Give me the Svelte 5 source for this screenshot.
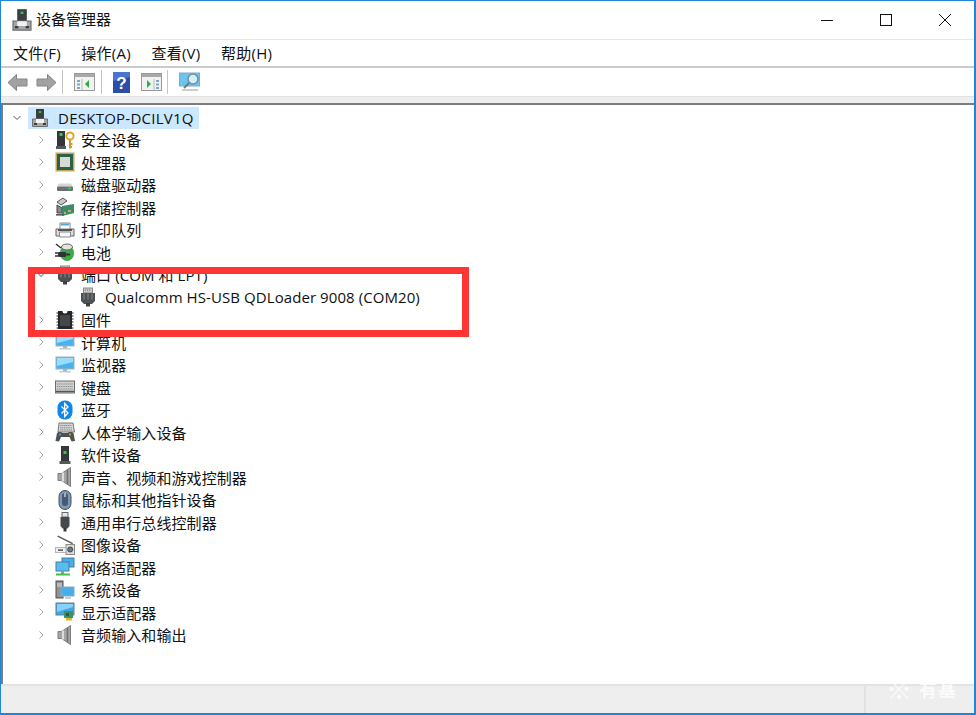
<script lang="ts">
  const menus = ["文件(F)", "操作(A)", "查看(V)", "帮助(H)"];

  const devices = [
    { label: "安全设备", icon: "security" },
    { label: "处理器", icon: "cpu" },
    { label: "磁盘驱动器", icon: "disk" },
    { label: "存储控制器", icon: "storage" },
    { label: "打印队列", icon: "printer" },
    { label: "电池", icon: "battery" },
    { label: "端口 (COM 和 LPT)", icon: "port", open: true },
    { label: "Qualcomm HS-USB QDLoader 9008 (COM20)", icon: "port", child: true },
    { label: "固件", icon: "firmware" },
    { label: "计算机", icon: "monitor" },
    { label: "监视器", icon: "monitor" },
    { label: "键盘", icon: "keyboard" },
    { label: "蓝牙", icon: "bluetooth" },
    { label: "人体学输入设备", icon: "hid" },
    { label: "软件设备", icon: "software" },
    { label: "声音、视频和游戏控制器", icon: "sound" },
    { label: "鼠标和其他指针设备", icon: "mouse" },
    { label: "通用串行总线控制器", icon: "usb" },
    { label: "图像设备", icon: "camera" },
    { label: "网络适配器", icon: "network" },
    { label: "系统设备", icon: "system" },
    { label: "显示适配器", icon: "display" },
    { label: "音频输入和输出", icon: "sound" },
  ];
</script>

{#snippet computer_icon(size)}
  <svg width={size} height={size} viewBox="0 0 20 20">
    <rect x="6" y="1" width="8" height="10" fill="#3c3f42" />
    <rect x="8.800" y="3" width="2.400" height="2" fill="#35c24a" />
    <path d="M2.500 11h15v7.500h-15z" fill="#a8a8a8" stroke="#6f6f6f" />
    <path d="M6 11h8v4H6z" fill="#f2f2f2" />
    <rect x="4" y="15" width="3" height="2" fill="#3c3f42" />
    <rect x="13" y="15" width="3" height="2" fill="#3c3f42" />
  </svg>
{/snippet}

{#snippet device_icon(name)}
  <svg width="20" height="20" viewBox="0 0 20 20">
    {#if name === "security"}
      <rect x="2" y="1" width="8" height="15" fill="#34383a" />
      <rect x="4.500" y="3" width="3" height="3" fill="#2ecc40" />
      <rect x="1" y="16" width="10" height="3" fill="#55595c" />
      <circle cx="15" cy="6" r="3.600" fill="none" stroke="#e0a52e" stroke-width="2" />
      <path d="M15 9.500v9M15 14h2.500M15 17h2" stroke="#d5982a" stroke-width="2" fill="none" />
    {:else if name === "cpu"}
      <rect x="0.500" y="0.500" width="19" height="19" fill="#c4a65a" />
      <rect x="2" y="2" width="16" height="16" fill="#2c6148" />
      <rect x="5" y="5" width="10" height="10" fill="#d9dad6" />
    {:else if name === "disk"}
      <path d="M2 11.500 4 8.500h12l2 3z" fill="#d5d5d5" />
      <rect x="2" y="11.500" width="16" height="4.500" rx="1" fill="#6c6f71" />
      <rect x="13" y="12.600" width="3" height="1.600" fill="#37d04a" />
    {:else if name === "storage"}
      <path d="M2 5 8 1l4 3-6 4z" fill="#c9c9c9" stroke="#555" />
      <path d="M2 8l5 3v5H2z" fill="#8b8b8b" stroke="#444" />
      <path d="M7 9l12-2v9l-12 3z" fill="#3b8c68" />
      <path d="M9 15h2v2H9zM13 13h3v2h-3z" fill="#c7b15a" />
      <path d="M1 17h8v1.600H1z" fill="#55595c" />
    {:else if name === "printer"}
      <path d="M1 9h18v7H1z" fill="#dcdee0" stroke="#63676a" />
      <path d="M5 3h10v6H5z" fill="#fff" stroke="#8a8a8a" />
      <path d="M6 3.500h8v2H6z" fill="#4aa8e8" />
      <path d="M3 9h14v2H3z" fill="#50565a" />
      <path d="M4.500 12h11v5h-11z" fill="#f8f8f8" stroke="#8a8a8a" />
    {:else if name === "battery"}
      <ellipse cx="12" cy="11" rx="7" ry="8" fill="#3ea84a" />
      <ellipse cx="12" cy="5" rx="5.500" ry="3" fill="#dfe6e0" stroke="#666" />
      <path d="M1 2l5 4" stroke="#333" stroke-width="1.500" />
      <rect x="3" y="10" width="8" height="5" rx="1" fill="#2f3335" />
      <path d="M0 11h3M0 14h3" stroke="#2f3335" stroke-width="1.400" />
      <path d="M11 12.500h4" stroke="#2f3335" stroke-width="2" />
    {:else if name === "port"}
      <rect x="5.500" y="1" width="9" height="5" fill="#c6c6c6" stroke="#8a8a8a" />
      <path d="M7 3h6" stroke="#777" stroke-dasharray="1 1" />
      <path d="M3 6h14v8l-3 3H6l-3-3z" fill="#4d5154" />
      <rect x="8" y="16" width="4" height="3.500" fill="#3c4042" />
      <path d="M6 6.500v6M10 6.500v6M14 6.500v6" stroke="#7f8284" stroke-width="1.200" />
    {:else if name === "firmware"}
      <path d="M3 1h4.500a2.500 2.500 0 0 0 5 0H17v18H3z" fill="#25282a" />
      <path d="M3 3H1.500M3 6H1.500M3 9H1.500M3 12H1.500M3 15H1.500M3 18H1.500M17 3h1.500M17 6h1.500M17 9h1.500M17 12h1.500M17 15h1.500M17 18h1.500" stroke="#6d6d6d" stroke-width="1.500" />
      <rect x="5" y="5" width="10" height="11" fill="#44484a" />
    {:else if name === "monitor"}
      <rect x="1" y="2" width="18" height="12" fill="#49b2ee" stroke="#9fb4c4" />
      <path d="M2 3h16v4L2 11z" fill="#9cdcfb" />
      <rect x="8" y="14" width="4" height="2" fill="#a9b3ba" />
      <rect x="4.500" y="16" width="11" height="1.500" fill="#c3c9cd" />
    {:else if name === "keyboard"}
      <rect x="0.500" y="4" width="19" height="12" fill="#cfd0d0" stroke="#6c6e70" />
      <path d="M2 7h16M2 9.500h16M2 12h16" stroke="#8b8d8e" stroke-dasharray="1.200 .6" />
      <path d="M1 14.500h18" stroke="#55585a" stroke-width="1.500" />
    {:else if name === "bluetooth"}
      <rect x="2.500" y="0.500" width="15" height="19" rx="7" fill="#0f86e8" />
      <path d="M6.500 6.500 13 13l-3.300 3.500v-13L13 7l-6.500 6.500" fill="none" stroke="#fff" stroke-width="1.300" />
    {:else if name === "hid"}
      <path d="M3 10 4 1h14l1.500 9z" fill="#d5d5d5" stroke="#777" />
      <path d="M5.500 3.500h11M5.200 5.800h11.600M5 8h12" stroke="#808080" stroke-dasharray="1.200 .6" />
      <path d="M0.500 19l1.500-8c1-1.500 4.500-1.500 5.500 0h5c1-1.500 5-1.500 6 0l1.500 8-3.500 .5-2-4.500H6l-2 4.500z" fill="#4d5255" />
      <circle cx="15" cy="12.500" r="1" fill="#e6b422" />
      <circle cx="5" cy="12.500" r="1" fill="#4aa8e8" />
    {:else if name === "software"}
      <rect x="6" y="1" width="8" height="15" fill="#34383a" />
      <rect x="8.500" y="6" width="3" height="3" fill="#2ecc40" />
      <rect x="4.500" y="16" width="11" height="3" fill="#55595c" />
    {:else if name === "sound"}
      <path d="M3 6.500h3.500L15.500 .5v19l-9-6H3z" fill="#a3a5a6" stroke="#7c7e80" />
      <path d="M8 5.500v9" stroke="#dcdcdc" stroke-width="2" />
      <path d="M12.500 3v14" stroke="#6d6f70" stroke-width="1.500" />
    {:else if name === "mouse"}
      <rect x="4" y="0.500" width="12" height="19" rx="6" fill="#7d97b4" stroke="#45525e" />
      <rect x="7" y="3" width="6" height="13" rx="3" fill="#445a75" />
      <path d="M10 3v4" stroke="#c4cfdb" stroke-width="1.500" />
    {:else if name === "usb"}
      <rect x="7" y="0.500" width="6" height="4.500" fill="#e6e6e6" stroke="#666" />
      <path d="M5.500 5h9v9l-2 2.500h-5L5.500 14z" fill="#45494c" />
      <rect x="8.500" y="16" width="3" height="3.500" fill="#34383a" />
    {:else if name === "camera"}
      <path d="M3 .5l15 7.500-.6 1.200L2.400 1.700z" fill="#55585a" />
      <rect x="11" y="9.500" width="8.500" height="10" fill="#d9d9d9" stroke="#8a8a8a" />
      <circle cx="15.200" cy="14.500" r="2.500" fill="#5b7f92" stroke="#444" />
      <rect x="0.500" y="12.500" width="10.500" height="5" fill="#ececec" stroke="#b5b5b5" />
      <rect x="3" y="14.500" width="5" height="1.200" fill="#333" />
    {:else if name === "network"}
      <rect x="7" y="1" width="12" height="9" fill="#46aeea" stroke="#4c7d9a" />
      <rect x="1" y="5" width="13" height="9" fill="#54bdf2" stroke="#4c7d9a" />
      <path d="M6 14h3v3H6z" fill="#8ba08e" />
      <path d="M1 17.500h14" stroke="#3fbf4a" stroke-width="2" />
    {:else if name === "system"}
      <rect x="1" y="1" width="7" height="17" fill="#8f9294" stroke="#4c5052" />
      <path d="M2 4h5M2 6h5" stroke="#e0e0e0" />
      <rect x="6" y="7" width="13" height="9" fill="#46aeea" stroke="#8fa7b8" />
      <path d="M10 18h6" stroke="#b9c1c6" stroke-width="1.500" />
    {:else if name === "display"}
      <rect x="1" y="1" width="18" height="12" fill="#3fa6e4" stroke="#647f94" />
      <path d="M2 2h16v3L2 10z" fill="#86d2f8" />
      <rect x="9" y="9" width="9" height="7" fill="#3f8f68" />
      <rect x="11" y="16" width="6" height="2.500" fill="#e4b32a" />
      <rect x="11" y="11" width="3" height="3" fill="#2b5e46" />
    {/if}
  </svg>
{/snippet}

<div class="window">
  <header class="titlebar">
    {@render computer_icon(24)}
    <span class="title">设备管理器</span>
    <div class="caption">
      <span class="cap"><i class="min"></i></span>
      <span class="cap"><i class="max"></i></span>
      <span class="cap">
        <svg width="14" height="14" viewBox="0 0 14 14"><path d="M1 1l12 12M13 1L1 13" stroke="#111" fill="none" /></svg>
      </span>
    </div>
  </header>

  <nav class="menubar">
    {#each menus as menu}
      <span>{menu}</span>
    {/each}
  </nav>

  <div class="toolbar">
    <svg class="tool arrow" width="21" height="19" viewBox="0 0 21 19">
      <path d="M1 9.500l8.500-8v4.500h10.500v7H9.500v4.500z" fill="#a2a2a2" stroke="#858585" />
    </svg>
    <svg class="tool arrow" width="21" height="19" viewBox="0 0 21 19">
      <path d="M20 9.500l-8.500-8v4.500H1v7h10.500v4.500z" fill="#a2a2a2" stroke="#858585" />
    </svg>
    <i class="sep"></i>
    <svg class="tool" width="21" height="18" viewBox="0 0 21 18">
      <rect x="0.500" y="0.500" width="20" height="17" fill="#f2f2f2" stroke="#9a9a9a" />
      <rect x="1" y="1" width="19" height="3" fill="#a8a8a8" />
      <path d="M3 7h3v2H3zM3 10.500h3v2H3zM3 14h3v2H3z" fill="#7aa9c9" />
      <path d="M8 6v11" stroke="#bbb" />
      <path d="M15 7v8l-4-4z" fill="#2fae3f" />
    </svg>
    <i class="sep"></i>
    <svg class="tool help" width="17" height="21" viewBox="0 0 17 21">
      <rect width="17" height="21" fill="#2c4ea8" />
      <path d="M0 0h17v5L0 9z" fill="#4a74d2" />
      <text x="8.500" y="16.500" text-anchor="middle" class="help-mark">?</text>
    </svg>
    <svg class="tool" width="21" height="18" viewBox="0 0 21 18">
      <rect x="0.500" y="0.500" width="20" height="17" fill="#f2f2f2" stroke="#9a9a9a" />
      <rect x="1" y="1" width="19" height="3" fill="#a8a8a8" />
      <path d="M15 7h3v2h-3zM15 10.500h3v2h-3zM15 14h3v2h-3z" fill="#7aa9c9" />
      <path d="M13 6v11" stroke="#bbb" />
      <path d="M6 7v8l4-4z" fill="#2fae3f" />
    </svg>
    <i class="sep last"></i>
    <svg class="tool" width="22" height="20" viewBox="0 0 22 20">
      <rect x="0.500" y="1" width="20" height="13" fill="#6cc4ef" stroke="#86a9bf" />
      <circle cx="14" cy="7" r="5" fill="#d6eefa" stroke="#6d8fa5" stroke-width="1.500" />
      <path d="M10 11l-5 5" stroke="#6d7b84" stroke-width="2" />
      <path d="M3 18h16" stroke="#b5bfc5" stroke-width="1.500" />
    </svg>
  </div>

  <div class="strip"></div>

  <main class="tree">
    <div class="row root">
      <svg class="chev" width="8" height="5" viewBox="0 0 8 5"><path d="M.5.500 4 4 7.500.500" fill="none" stroke="#555" /></svg>
      <div class="host">
        {@render computer_icon(20)}
        <span>DESKTOP-DCILV1Q</span>
      </div>
    </div>
    {#each devices as item}
      <div class="row" class:child={item.child}>
        {#if item.open}
          <svg class="chev" width="8" height="5" viewBox="0 0 8 5"><path d="M.5.500 4 4 7.500.500" fill="none" stroke="#555" /></svg>
        {:else if !item.child}
          <svg class="chev closed" width="5" height="8" viewBox="0 0 5 8"><path d="M.5.500 4 4 .5 7.500" fill="none" stroke="#a6a6a6" /></svg>
        {/if}
        {@render device_icon(item.icon)}
        <span class="label">{item.label}</span>
      </div>
    {/each}
  </main>

  <footer class="statusbar">
    <div class="pane"></div>
    <div class="pane last"></div>
  </footer>

  <div class="callout"></div>
  <div class="watermark"><span class="flake">※</span><span>有基</span></div>
</div>

<style>
  :global(body) {
    margin: 0;
    background: #fff;
  }

  .window {
    position: relative;
    box-sizing: border-box;
    display: flex;
    flex-direction: column;
    width: 976px;
    height: 715px;
    overflow: hidden;
    border: 2px solid #1c86d8;
    border-top-width: 1px;
    border-left-width: 1.500px;
    background: #fff;
    color: #111;
    font-family: "Open Sans", "Noto Sans CJK SC", sans-serif;
    font-size: 15px;
  }

  .titlebar {
    display: flex;
    align-items: center;
    flex: 0 0 38px;
    padding-left: 9px;
    gap: 2px;
    border-bottom: 1px solid #e6e6e6;
  }

  .title {
    font-size: 15px;
    margin-top: -4px;
  }

  .caption {
    display: flex;
    margin-left: auto;
    margin-right: 0;
  }

  .cap {
    display: flex;
    align-items: center;
    justify-content: center;
    width: 59px;
    height: 38px;
  }

  .min {
    display: block;
    width: 12px;
    height: 1px;
    background: #111;
  }

  .max {
    display: block;
    box-sizing: border-box;
    width: 12px;
    height: 12px;
    border: 1px solid #111;
  }

  .menubar {
    display: flex;
    align-items: center;
    box-sizing: border-box;
    flex: 0 0 28px;
    gap: 20.500px;
    padding: 0 0 2px 12px;
    letter-spacing: 0.25px;
    border-bottom: 2px solid #c9cbce;
  }

  .toolbar {
    display: flex;
    align-items: center;
    flex: 0 0 28px;
    padding-left: 5.500px;
  }

  .tool {
    flex: none;
    margin-right: 9px;
  }

  .arrow {
    margin-right: 8px;
  }

  .help {
    margin-left: 0;
    margin-right: 11px;
  }

  .help-mark {
    fill: #fff;
    font-family: "Liberation Sans", sans-serif;
    font-size: 17px;
    font-weight: 700;
  }

  .sep {
    display: block;
    flex: none;
    width: 1px;
    height: 24px;
    margin: 0 11px 0 -3px;
    background: #c4c4c4;
  }

  .sep.last {
    margin: 0 11px 0 -4px;
  }

  .strip {
    flex: 0 0 9px;
    box-sizing: border-box;
    background: #eeeeee;
    border-top: 1px solid #e2e2e2;
    border-bottom: 2px solid #7c7c7c;
  }

  .tree {
    flex: 1;
    min-height: 0;
    padding-top: 2px;
    border-left: 2px solid #7c7c7c;
  }

  .row {
    display: flex;
    align-items: center;
    height: 22.500px;
    padding-left: 52px;
    position: relative;
    white-space: nowrap;
  }

  .row .chev {
    position: absolute;
    left: 34px;
    top: 50%;
    transform: translateY(-50%);
  }

  .row .chev.closed {
    left: 36px;
  }

  .row .label {
    margin-left: 6px;
    letter-spacing: 0.08px;
  }

  .row.child {
    padding-left: 75px;
  }

  .row.child .label {
    margin-left: 7px;
  }

  .row.root {
    height: 21.500px;
    padding-left: 25px;
  }

  .row.root .chev {
    left: 10px;
  }

  .host {
    display: flex;
    flex: none;
    align-items: center;
    gap: 8px;
    height: 22px;
    padding: 0 5px 0 2px;
    letter-spacing: 0.25px;
    background: #cce8ff;
  }

  .statusbar {
    display: flex;
    flex: 0 0 29px;
    box-sizing: border-box;
    background: #eeeeee;
    border-top: 2px solid #e3e3e3;
  }

  .pane {
    flex: 0 0 863px;
    border-right: 2px solid #e2e2e2;
  }

  .pane.last {
    flex: 1;
    border-right: 0;
  }

  .callout {
    position: absolute;
    left: 26.500px;
    top: 266px;
    box-sizing: border-box;
    width: 441px;
    height: 70px;
    border: 7px solid #fe3535;
  }

  .watermark {
    position: absolute;
    left: 885px;
    top: 675px;
    display: flex;
    align-items: center;
    gap: 6px;
    color: #fff;
    font-size: 18px;
    font-weight: 700;
    opacity: 0.8;
    letter-spacing: 1px;
  }

  .flake {
    font-size: 26px;
    line-height: 26px;
  }
</style>
